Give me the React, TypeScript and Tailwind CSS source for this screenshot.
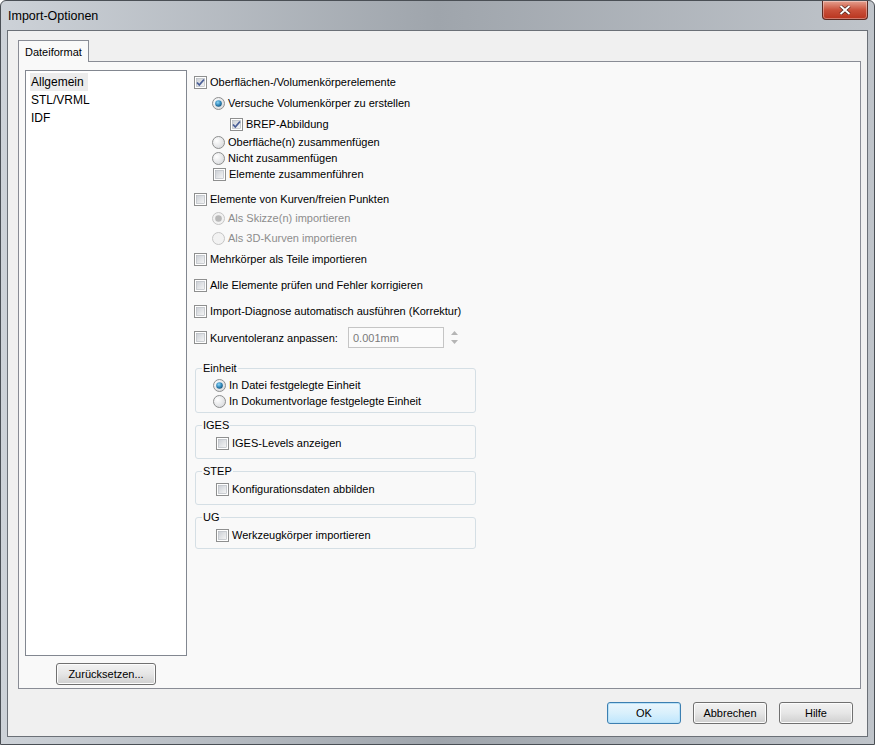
import React from "react";

const font = "font-['Liberation_Sans',Arial,sans-serif]";

const CheckBox = ({ checked = false }: { checked?: boolean }) => (
	<svg width="13" height="13" viewBox="0 0 13 13" className="shrink-0">
		<defs>
			<linearGradient id="cbg" x1="0" y1="0" x2="1" y2="1">
				<stop offset="0" stopColor="#cbcfd5" />
				<stop offset="1" stopColor="#f6f6f6" />
			</linearGradient>
		</defs>
		<rect x="0.5" y="0.5" width="12" height="12" fill="#fff" stroke="#8e8f8f" />
		<rect x="2.5" y="2.5" width="8" height="8" fill="url(#cbg)" stroke="#aeb3b9" strokeWidth="0.6" />
		{checked && (
			<path d="M3 6.5 L5.3 9 L10 3.5" fill="none" stroke="#4a5f97" strokeWidth="1.8" />
		)}
	</svg>
);

const Radio = ({ checked = false, disabled = false }: { checked?: boolean; disabled?: boolean }) => (
	<svg width="13" height="13" viewBox="0 0 13 13" className="shrink-0">
		<defs>
			<radialGradient id="rbg" cx="0.35" cy="0.35" r="0.8">
				<stop offset="0" stopColor="#ffffff" />
				<stop offset="1" stopColor="#d4d6d9" />
			</radialGradient>
			<radialGradient id="rdot" cx="0.4" cy="0.35" r="0.7">
				<stop offset="0" stopColor="#8cd6f7" />
				<stop offset="0.6" stopColor="#2f85b8" />
				<stop offset="1" stopColor="#124e74" />
			</radialGradient>
		</defs>
		<circle
			cx="6.5"
			cy="6.5"
			r="6"
			fill={disabled ? "#f2f2f2" : "url(#rbg)"}
			stroke={disabled ? "#c4c4c4" : "#8e8f8f"}
		/>
		{checked && <circle cx="6.5" cy="6.5" r="3.3" fill={disabled ? "#b8b8b8" : "url(#rdot)"} />}
	</svg>
);

const Row = ({
	control,
	label,
	indent = 0,
	className = "",
	disabled = false,
}: {
	control: React.ReactNode;
	label: string;
	indent?: number;
	className?: string;
	disabled?: boolean;
}) => (
	<div className={`flex items-center h-4 ${className}`} style={{ paddingLeft: indent }}>
		{control}
		<span className={`ml-[3px] whitespace-nowrap ${disabled ? "text-[#8d8d8d]" : "text-black"}`}>{label}</span>
	</div>
);

const Group = ({ title, children, className = "" }: { title: string; children: React.ReactNode; className?: string }) => (
	<fieldset className={`w-[281px] ml-px border border-[#d5dfe5] rounded-[3px] px-0 ${className}`}>
		<legend className="ml-[6px] px-px leading-[14px] text-black">{title}</legend>
		{children}
	</fieldset>
);

const Button = ({ children, primary = false, className = "" }: { children: React.ReactNode; primary?: boolean; className?: string }) => (
	<button
		type="button"
		className={`h-[22px] rounded-[3px] border text-black ${
			primary
				? "border-[#3c7fb1] bg-gradient-to-b from-[#eaf6fd] via-[#d9f0fc] to-[#bee6fd] shadow-[inset_0_0_0_1px_#b9e1f7]"
				: "border-[#707070] bg-gradient-to-b from-[#f2f2f2] via-[#e6e6e6] to-[#cfcfcf] shadow-[inset_0_0_0_1px_#fcfcfc]"
		} ${className}`}
	>
		{children}
	</button>
);

export default function App() {
	return (
		<div className={`w-[875px] h-[745px] ${font} text-[11px] leading-4 overflow-hidden`}>
			<div className="w-full h-full flex flex-col rounded-t-[6px] border border-[#4a4f55] bg-gradient-to-r from-[#cdd2d8] via-[#9fa5ac] to-[#bfc4ca]">
				{/* title bar */}
				<div className="h-[29px] flex items-start justify-between">
					<div className="pl-[7px] pt-[7px] text-[12.5px] text-black">Import-Optionen</div>
					<div className="mr-[6px] w-[46px] h-[19px] rounded-b-[4px] border border-t-0 border-[#5b2a22] bg-gradient-to-b from-[#e4a08f] via-[#c9503a] to-[#b8331d] shadow-[inset_0_0_0_1px_rgba(255,255,255,0.35)] flex items-center justify-center">
						<svg width="12" height="10" viewBox="0 0 12 10">
							<path d="M1.5 1 L10.5 9 M10.5 1 L1.5 9" stroke="#3c1b14" strokeWidth="3.2" />
							<path d="M1.5 1 L10.5 9 M10.5 1 L1.5 9" stroke="#ffffff" strokeWidth="2" />
						</svg>
					</div>
				</div>
				{/* client area */}
				<div className="mx-[6px] mb-[7px] flex-1 border border-[#6b7077] bg-[#f0f0f0] flex flex-col">
					<div className="pl-[10px] pt-[9px] pr-[6px] flex flex-col">
						{/* tab header */}
						<div className="flex">
							<div className="relative z-10 h-[22px] px-[6px] border border-b-0 border-[#898c95] bg-[#f9f9f9] flex items-center text-black">
								Dateiformat
							</div>
						</div>
						{/* tab panel */}
						<div className="-mt-px h-[628px] border border-[#898c95] bg-[#f9f9f9] flex pl-[6px] pt-[8px]">
							{/* left list */}
							<div className="w-[162px] flex flex-col items-center">
								<div className="w-full h-[586px] border border-[#828790] bg-white px-[4px] pt-[2px] text-[12px] leading-[18px]">
									<div className="bg-[#ececec] w-[58px] pl-[1px]">Allgemein</div>
									<div className="pl-[1px]">STL/VRML</div>
									<div className="pl-[1px]">IDF</div>
								</div>
								<Button className="mt-[7px] w-[100px]">Zurücksetzen...</Button>
							</div>
							{/* right options */}
							<div className="ml-[7px] pt-[4px] flex flex-col">
								<Row control={<CheckBox checked />} label="Oberflächen-/Volumenkörperelemente" />
								<Row className="mt-[5px]" indent={18} control={<Radio checked />} label="Versuche Volumenkörper zu erstellen" />
								<Row className="mt-[5px]" indent={36} control={<CheckBox checked />} label="BREP-Abbildung" />
								<Row className="mt-[2px]" indent={18} control={<Radio />} label="Oberfläche(n) zusammenfügen" />
								<Row indent={18} control={<Radio />} label="Nicht zusammenfügen" />
								<Row indent={19} control={<CheckBox />} label="Elemente zusammenführen" />
								<Row className="mt-[9px]" control={<CheckBox />} label="Elemente von Kurven/freien Punkten" />
								<Row className="mt-[3px]" indent={18} disabled control={<Radio checked disabled />} label="Als Skizze(n) importieren" />
								<Row className="mt-[4px]" indent={18} disabled control={<Radio disabled />} label="Als 3D-Kurven importieren" />
								<Row className="mt-[5px]" control={<CheckBox />} label="Mehrkörper als Teile importieren" />
								<Row className="mt-[10px]" control={<CheckBox />} label="Alle Elemente prüfen und Fehler korrigieren" />
								<Row className="mt-[10px]" control={<CheckBox />} label="Import-Diagnose automatisch ausführen (Korrektur)" />
								<div className="mt-[8px] h-[21px] flex items-center">
									<CheckBox />
									<span className="ml-[3px] w-[138px] whitespace-nowrap">Kurventoleranz anpassen:</span>
									<div className="w-[96px] h-[21px] border border-[#c5c5c5] bg-[#fbfbfb] flex items-center pl-[4px] text-[#7a7a7a]">
										0.001mm
									</div>
									<div className="ml-[4px] w-[12px] h-[21px] flex flex-col items-center justify-center gap-[5px]">
										<svg width="7" height="4" viewBox="0 0 7 4">
											<path d="M0 4 L3.5 0 L7 4 Z" fill="#b5b5b5" />
										</svg>
										<svg width="7" height="4" viewBox="0 0 7 4">
											<path d="M0 0 L3.5 4 L7 0 Z" fill="#b5b5b5" />
										</svg>
									</div>
								</div>
								<Group title="Einheit" className="mt-[13px] h-[52px] pt-[2px]">
									<Row indent={17} control={<Radio checked />} label="In Datei festgelegte Einheit" />
									<Row indent={17} control={<Radio />} label="In Dokumentvorlage festgelegte Einheit" />
								</Group>
								<Group title="IGES" className="mt-[5px] h-[41px] pt-[3px]">
									<Row indent={20} control={<CheckBox />} label="IGES-Levels anzeigen" />
								</Group>
								<Group title="STEP" className="mt-[5px] h-[41px] pt-[3px]">
									<Row indent={20} control={<CheckBox />} label="Konfigurationsdaten abbilden" />
								</Group>
								<Group title="UG" className="mt-[5px] h-[39px] pt-[3px]">
									<Row indent={20} control={<CheckBox />} label="Werkzeugkörper importieren" />
								</Group>
							</div>
						</div>
					</div>
					{/* bottom buttons */}
					<div className="mt-[13px] pr-[14px] flex justify-end gap-[12px]">
						<Button primary className="w-[74px]">OK</Button>
						<Button className="w-[74px]">Abbrechen</Button>
						<Button className="w-[74px]">Hilfe</Button>
					</div>
				</div>
			</div>
		</div>
	);
}
